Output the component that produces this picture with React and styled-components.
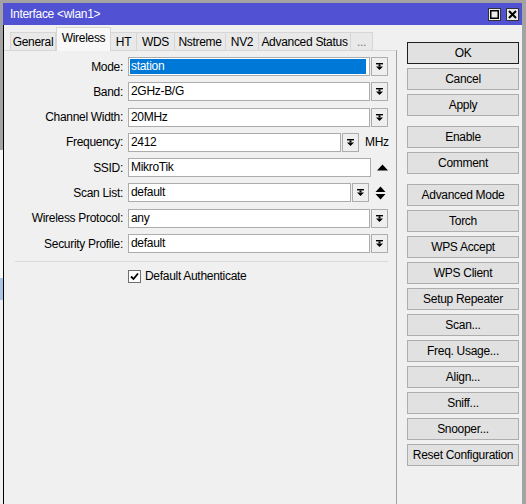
import React from "react";
import styled, { createGlobalStyle } from "styled-components";

const GlobalStyle = createGlobalStyle`
  html, body {
    margin: 0;
    padding: 0;
  }
  body {
    width: 526px;
    height: 504px;
    overflow: hidden;
    background: #a3a3a3;
    font-family: "Liberation Sans", Arial, sans-serif;
    font-size: 12px;
    letter-spacing: -0.3px;
    color: #000;
  }
`;

const Screen = styled.div`
  display: flex;
  height: 504px;
`;

const BackWindow = styled.div`
  width: 3px;
  background: linear-gradient(
    to bottom,
    #a3a3a3 0,
    #a3a3a3 150px,
    #f6f6f6 150px,
    #f6f6f6 278px,
    #a9c4e4 278px,
    #a9c4e4 300px,
    #f0f0f0 300px
  );
`;

const Window = styled.div`
  width: 519px;
  display: flex;
  flex-direction: column;
  margin-top: 3px;
`;

const TitleBar = styled.div`
  height: 22px;
  background: #5151d3;
  display: flex;
  align-items: center;
  padding: 0 3px 0 7px;
  color: #fff;
`;

const Title = styled.span`
  flex: 1;
`;

const TitleButton = styled.div`
  width: 11px;
  height: 11px;
  margin-left: 5px;
  border: 1px solid #333;
  background: #ececec;
  display: flex;
  align-items: center;
  justify-content: center;
`;

const Body = styled.div`
  flex: 1;
  display: flex;
  background: #f0f0f0;
  border-left: 1px solid #000;
`;

const LeftCol = styled.div`
  width: 393px;
  display: flex;
  flex-direction: column;
`;

const Tabs = styled.div`
  height: 25px;
  display: flex;
  align-items: flex-end;
  padding-left: 6px;
`;

const Tab = styled.div`
  box-sizing: border-box;
  height: ${(p) => (p.active ? "24px" : "18px")};
  margin-bottom: ${(p) => (p.active ? "-1px" : "0")};
  position: relative;
  z-index: ${(p) => (p.active ? 1 : 0)};
  display: flex;
  align-items: ${(p) => (p.active ? "flex-start" : "center")};
  padding-top: ${(p) => (p.active ? "3px" : "0")};
  justify-content: center;
  white-space: nowrap;
  border: 1px solid #d6d6d6;
  border-bottom: none;
  border-left: ${(p) => (p.first || p.active ? "1px solid #d6d6d6" : "none")};
  background: ${(p) => (p.active ? "#f8f8f8" : "#e9e9e9")};
  color: ${(p) => (p.muted ? "#777" : "#000")};
`;

const Panel = styled.div`
  flex: 1;
  border-top: 1px solid #d6d6d6;
  border-right: 1px solid #a0a0a0;
  padding-top: 6px;
  display: flex;
  flex-direction: column;
`;

const Rows = styled.div`
  display: flex;
  flex-direction: column;
  gap: 6.3px;
`;

const Row = styled.div`
  display: flex;
  align-items: center;
  height: 19px;
`;

const Label = styled.div`
  width: 119px;
  margin-right: 5px;
  text-align: right;
  white-space: nowrap;
`;

const Field = styled.div`
  box-sizing: border-box;
  width: ${(p) => p.width}px;
  height: 19px;
  border: 1px solid #acacac;
  background: #fff;
  padding: 1px;
  display: flex;
`;

const Value = styled.div`
  flex: 1;
  line-height: 15px;
  padding-left: 1px;
  background: ${(p) => (p.selected ? "#0078d7" : "transparent")};
  color: ${(p) => (p.selected ? "#fff" : "#000")};
  margin-right: ${(p) => (p.selected ? "2px" : "0")};
`;

const DropButton = styled.div`
  box-sizing: border-box;
  width: 17px;
  height: 19px;
  margin-left: 1px;
  border: 1px solid #adadad;
  background: #efefef;
  display: flex;
  align-items: center;
  justify-content: center;
`;

const Unit = styled.span`
  margin-left: 6px;
`;

const SideIcon = styled.div`
  margin-left: 6px;
  width: 11px;
  display: flex;
  align-items: center;
  justify-content: center;
`;

const Separator = styled.div`
  height: 1px;
  width: 373px;
  margin: 8px 0 0 11px;
  background: #dadada;
`;

const CheckRow = styled.label`
  display: flex;
  align-items: center;
  margin: 7px 0 0 124px;
`;

const CheckBox = styled.div`
  box-sizing: border-box;
  width: 13px;
  height: 13px;
  border: 1px solid #6f6f6f;
  background: #fff;
  display: flex;
  align-items: center;
  justify-content: center;
  margin-right: 4px;
`;

const RightCol = styled.div`
  width: 125px;
  box-sizing: border-box;
  padding: 17px 0 0 10px;
  display: flex;
  flex-direction: column;
`;

const Button = styled.button`
  box-sizing: border-box;
  width: 112px;
  height: 22px;
  margin: ${(p) => (p.groupStart ? "6px" : "0")} 0 4px 0;
  padding: 0;
  border: 1px solid ${(p) => (p.primary ? "#1e1e1e" : "#adadad")};
  background: #e1e1e1;
  font: inherit;
  letter-spacing: inherit;
  color: #000;
  line-height: 20px;
  text-align: center;
  white-space: nowrap;
`;

const DropIcon = () => (
  <svg width="9" height="9" viewBox="0 0 9 9">
    <rect x="1" y="1" width="7" height="1.4" fill="#000" />
    <rect x="3.5" y="2.4" width="2" height="2" fill="#000" />
    <polygon points="1,4.4 8,4.4 4.5,8" fill="#000" />
  </svg>
);

const UpIcon = () => (
  <svg width="11" height="7" viewBox="0 0 11 7">
    <polygon points="0,6.5 11,6.5 5.5,0.5" fill="#000" />
  </svg>
);

const UpDownIcon = () => (
  <svg width="11" height="14" viewBox="0 0 11 14">
    <polygon points="0.5,6 10.5,6 5.5,0.5" fill="#000" />
    <polygon points="0.5,8 10.5,8 5.5,13.5" fill="#000" />
  </svg>
);

const tabs = [
  { name: "General", width: 46 },
  { name: "Wireless", width: 55, active: true },
  { name: "HT", width: 26 },
  { name: "WDS", width: 38 },
  { name: "Nstreme", width: 51 },
  { name: "NV2", width: 33 },
  { name: "Advanced Status", width: 92 },
  { name: "...", width: 22, muted: true },
];

const buttons = [
  { label: "OK", primary: true },
  { label: "Cancel" },
  { label: "Apply" },
  { label: "Enable", groupStart: true },
  { label: "Comment" },
  { label: "Advanced Mode", groupStart: true },
  { label: "Torch" },
  { label: "WPS Accept" },
  { label: "WPS Client" },
  { label: "Setup Repeater" },
  { label: "Scan..." },
  { label: "Freq. Usage..." },
  { label: "Align..." },
  { label: "Sniff..." },
  { label: "Snooper..." },
  { label: "Reset Configuration" },
];

const App = () => {
  return (
    <>
      <GlobalStyle />
      <Screen>
        <BackWindow />
        <Window>
          <TitleBar>
            <Title>Interface &lt;wlan1&gt;</Title>
            <TitleButton>
              <svg width="9" height="9" viewBox="0 0 9 9">
                <rect x="0.75" y="0.75" width="7.5" height="7.5" fill="none" stroke="#000" strokeWidth="1.5" />
              </svg>
            </TitleButton>
            <TitleButton>
              <svg width="9" height="9" viewBox="0 0 9 9">
                <path d="M1 1 L8 8 M8 1 L1 8" stroke="#000" strokeWidth="2" />
              </svg>
            </TitleButton>
          </TitleBar>
          <Body>
            <LeftCol>
              <Tabs>
                {tabs.map((t, i) => (
                  <Tab
                    key={t.name}
                    active={t.active}
                    first={i === 0}
                    muted={t.muted}
                    style={{ width: t.width }}
                  >
                    {t.name}
                  </Tab>
                ))}
              </Tabs>
              <Panel>
                <Rows>
                  <Row>
                    <Label>Mode:</Label>
                    <Field width={242}>
                      <Value selected>station</Value>
                    </Field>
                    <DropButton><DropIcon /></DropButton>
                  </Row>
                  <Row>
                    <Label>Band:</Label>
                    <Field width={242}><Value>2GHz-B/G</Value></Field>
                    <DropButton><DropIcon /></DropButton>
                  </Row>
                  <Row>
                    <Label>Channel Width:</Label>
                    <Field width={242}><Value>20MHz</Value></Field>
                    <DropButton><DropIcon /></DropButton>
                  </Row>
                  <Row>
                    <Label>Frequency:</Label>
                    <Field width={213}><Value>2412</Value></Field>
                    <DropButton><DropIcon /></DropButton>
                    <Unit>MHz</Unit>
                  </Row>
                  <Row>
                    <Label>SSID:</Label>
                    <Field width={243}><Value>MikroTik</Value></Field>
                    <SideIcon><UpIcon /></SideIcon>
                  </Row>
                  <Row>
                    <Label>Scan List:</Label>
                    <Field width={223}><Value>default</Value></Field>
                    <DropButton><DropIcon /></DropButton>
                    <SideIcon><UpDownIcon /></SideIcon>
                  </Row>
                  <Row>
                    <Label>Wireless Protocol:</Label>
                    <Field width={242}><Value>any</Value></Field>
                    <DropButton><DropIcon /></DropButton>
                  </Row>
                  <Row>
                    <Label>Security Profile:</Label>
                    <Field width={242}><Value>default</Value></Field>
                    <DropButton><DropIcon /></DropButton>
                  </Row>
                </Rows>
                <Separator />
                <CheckRow>
                  <CheckBox>
                    <svg width="9" height="9" viewBox="0 0 9 9">
                      <path d="M1 4.5 L3.5 7 L8 1.5" fill="none" stroke="#000" strokeWidth="1.8" />
                    </svg>
                  </CheckBox>
                  Default Authenticate
                </CheckRow>
              </Panel>
            </LeftCol>
            <RightCol>
              {buttons.map((b) => (
                <Button key={b.label} primary={b.primary} groupStart={b.groupStart}>
                  {b.label}
                </Button>
              ))}
            </RightCol>
          </Body>
        </Window>
      </Screen>
    </>
  );
};

export default App;
